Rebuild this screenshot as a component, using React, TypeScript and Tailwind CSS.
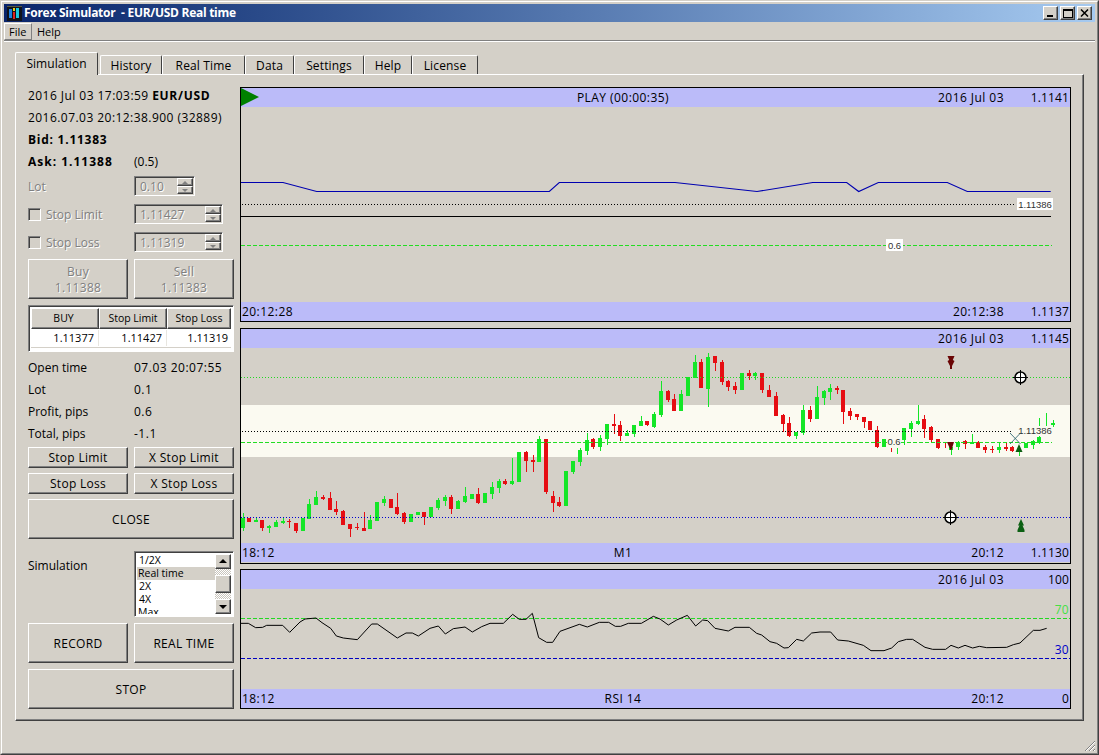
import React from "react";

const raised = "border border-t-white border-l-white border-r-[#404040] border-b-[#404040] shadow-[inset_-1px_-1px_0_#808080]";
const sunken = "border border-t-[#808080] border-l-[#808080] border-r-white border-b-white shadow-[inset_1px_1px_0_#404040]";
const disabledText = "text-[#808080] [text-shadow:1px_1px_0_#fff]";

// candles read off the 3x crops: [x, bodyTop, bodyBottom, wickTop, wickBottom, green?]
type Candle = [number, number, number, number, number, number];

const candlesA: Candle[] = [
  [8, 533, 565, 518, 572, 1], [28, 533, 545, 533, 545, 0], [47, 540, 545, 535, 547, 1], [67, 540, 565, 540, 572, 0],
  [88, 558, 565, 555, 578, 1], [109, 545, 562, 541, 562, 1], [128, 543, 549, 534, 552, 1], [148, 543, 547, 537, 563, 0],
  [169, 549, 573, 549, 578, 0], [190, 534, 573, 534, 573, 1], [208, 492, 536, 477, 538, 1], [229, 470, 495, 453, 495, 1],
  [250, 471, 476, 464, 480, 0], [270, 474, 510, 457, 510, 0], [289, 507, 516, 483, 524, 0], [310, 513, 554, 510, 554, 0],
  [331, 553, 566, 553, 590, 0], [352, 561, 565, 549, 569, 0], [371, 563, 572, 516, 572, 0], [391, 540, 566, 525, 566, 1],
  [412, 487, 542, 487, 542, 1], [433, 476, 490, 468, 497, 1], [454, 477, 505, 477, 505, 0], [472, 501, 522, 459, 525, 0],
  [493, 519, 546, 516, 551, 0], [514, 522, 545, 522, 545, 1], [535, 515, 525, 515, 525, 1], [553, 516, 532, 516, 555, 0],
  [574, 501, 532, 501, 532, 1], [595, 480, 505, 475, 510, 1], [616, 470, 483, 464, 497, 1], [634, 470, 507, 464, 521, 0],
  [655, 483, 506, 480, 507, 1], [676, 468, 487, 441, 488, 1], [697, 461, 477, 461, 477, 1], [715, 462, 490, 444, 492, 0],
  [736, 458, 488, 458, 488, 1], [757, 441, 462, 427, 476, 1], [778, 423, 444, 417, 458, 1], [796, 423, 432, 417, 434, 0],
  [817, 423, 432, 354, 435, 1], [838, 336, 427, 336, 427, 1], [859, 336, 362, 333, 396, 0], [878, 360, 366, 345, 396, 0],
];

const candlesB: Candle[] = [
  [28, 297, 365, 288, 365, 1], [49, 297, 457, 297, 462, 0], [70, 467, 488, 453, 516, 0], [88, 486, 498, 471, 500, 0],
  [109, 393, 497, 393, 497, 1], [130, 363, 397, 363, 402, 1], [151, 330, 366, 324, 378, 1], [172, 300, 333, 279, 345, 1],
  [190, 297, 321, 294, 327, 0], [211, 294, 321, 285, 333, 1], [232, 252, 297, 252, 315, 1], [253, 252, 258, 222, 282, 0],
  [271, 255, 288, 243, 303, 0], [292, 279, 288, 270, 288, 1], [313, 255, 282, 255, 291, 1], [334, 243, 258, 228, 258, 1],
  [352, 243, 255, 243, 258, 0], [373, 222, 261, 216, 264, 1], [394, 153, 225, 123, 231, 1], [415, 153, 180, 150, 186, 0],
  [433, 177, 213, 162, 213, 0], [454, 162, 213, 150, 213, 1], [475, 111, 168, 111, 168, 1], [496, 66, 114, 45, 114, 1],
  [514, 66, 144, 57, 144, 0], [535, 51, 147, 39, 201, 1], [556, 48, 69, 48, 93, 0], [577, 66, 126, 60, 135, 0],
  [595, 123, 141, 120, 153, 0], [616, 138, 150, 126, 162, 0], [637, 99, 150, 99, 150, 1], [658, 99, 108, 90, 120, 0],
  [676, 99, 108, 96, 120, 1], [697, 99, 150, 99, 159, 0], [718, 150, 171, 135, 171, 0], [739, 168, 228, 156, 228, 0],
  [760, 225, 252, 222, 276, 0], [778, 249, 288, 231, 291, 0], [799, 276, 288, 276, 297, 1], [820, 210, 279, 195, 285, 1],
];

const candlesC: Candle[] = [
  [31, 210, 238, 198, 246, 0], [50, 171, 237, 138, 237, 1], [71, 153, 174, 150, 195, 1], [91, 144, 156, 132, 180, 1],
  [112, 144, 150, 138, 162, 0], [130, 150, 216, 150, 252, 0], [151, 213, 228, 204, 240, 0], [172, 222, 231, 222, 240, 0],
  [193, 231, 246, 231, 264, 0], [211, 243, 270, 243, 270, 0], [232, 270, 321, 258, 324, 0], [253, 297, 321, 297, 321, 1],
  [274, 324, 324, 324, 336, 0], [292, 324, 324, 324, 342, 1], [313, 264, 300, 264, 315, 1], [334, 249, 267, 243, 291, 1],
  [355, 243, 252, 195, 255, 1], [373, 237, 267, 225, 294, 0], [394, 261, 300, 258, 306, 0], [415, 297, 324, 297, 327, 0],
  [436, 312, 312, 306, 324, 0], [454, 321, 330, 321, 345, 1], [475, 306, 321, 303, 330, 1], [496, 303, 312, 300, 327, 0],
  [517, 306, 312, 282, 312, 1], [535, 306, 324, 303, 324, 0], [556, 321, 330, 315, 339, 0], [577, 327, 330, 318, 339, 0],
  [598, 321, 330, 306, 339, 1], [619, 321, 327, 309, 333, 0], [637, 321, 333, 318, 336, 0], [658, 330, 336, 318, 348, 1],
  [679, 309, 324, 309, 324, 1], [700, 303, 315, 300, 327, 1], [718, 291, 309, 234, 312, 1], [739, 256, 256, 219, 258, 1],
  [760, 249, 255, 240, 261, 1],
];

const rsiA = [
  [3, 160], [25, 160], [47, 173], [68, 172], [80, 166], [128, 166], [149, 187], [180, 156], [195, 147], [228, 144], [246, 158], [272, 175],
  [289, 198], [310, 204], [352, 209], [395, 162], [412, 162], [472, 204], [498, 189], [517, 189], [535, 198], [570, 175], [595, 168], [616, 192],
  [640, 176], [675, 171], [697, 186], [725, 170], [750, 160], [790, 160], [818, 133], [838, 148], [858, 148], [877, 130], [896, 203], [920, 217],
  [938, 217], [960, 184], [1018, 163], [1042, 171], [1078, 157], [1106, 157], [1126, 169], [1142, 169], [1165, 160], [1204, 160], [1240, 139], [1260, 147],
];

const rsiB = [
  [25, 165], [50, 150], [82, 136], [107, 168], [128, 150], [143, 152], [165, 175], [205, 183], [225, 172], [268, 172], [290, 190], [305, 195],
  [330, 215], [350, 220], [372, 234], [385, 233], [410, 208], [430, 213], [455, 189], [480, 186], [512, 186], [533, 210], [565, 213], [610, 226],
  [633, 242], [672, 242], [695, 234], [715, 215], [740, 208], [758, 208], [795, 232], [818, 238], [857, 238], [873, 226], [895, 234], [915, 226],
  [938, 234], [958, 229], [980, 233], [1040, 232], [1060, 224], [1080, 219], [1120, 181], [1140, 181], [1160, 175],
];

const rsiPoints = [
  ...rsiA.map(([x, y]) => `${240 + x / 3},${570 + y / 3}`),
  ...rsiB.map(([x, y]) => `${660 + x / 3},${570 + y / 3}`),
].join(" ");

const Candles = ({ rows, ox }: { rows: Candle[]; ox: number }) => (
  <g shapeRendering="crispEdges">
    {rows.map(([x, bt, bb, wt, wb, up], i) => {
      const cx = Math.round(ox + x / 3);
      const color = up ? "#14e628" : "#e60d13";
      return (
        <g key={i} fill={color}>
          <rect x={cx} y={340 + wt / 3} width={1} height={(wb - wt) / 3} />
          <rect x={cx - 2} y={340 + bt / 3} width={4} height={(bb - bt) / 3} />
        </g>
      );
    })}
  </g>
);

const Band = ({ left, mid, date, value }: { left?: string; mid?: string; date?: string; value?: string }) => (
  <div className="flex h-[19px] shrink-0 items-center bg-[#bbbbf9] text-black">
    <div className="grid w-[763px] grid-cols-[1fr_auto_1fr] pl-[1px] tracking-[0.45px]">
      <span>{left}</span>
      <span>{mid}</span>
      <span className="text-right">{date}</span>
    </div>
    <span className="flex-1 pr-[1px] text-right tracking-[0.15px]">{value}</span>
  </div>
);

const Crosshair = ({ x, y }: { x: number; y: number }) => (
  <g stroke="#000">
    <circle cx={x} cy={y} r={5.5} fill="#fff" strokeWidth={1.5} />
    <path d={`M${x - 7.5} ${y}H${x + 7.5}M${x} ${y - 7.5}V${y + 7.5}`} strokeWidth={1} />
  </g>
);

const PriceChart = () => (
  <svg viewBox="241 107 829 195" className="block h-[195px] w-[829px]">
    <polyline
      points="241,182.5 283,182.5 316.7,191.5 549.3,191.5 559.3,182.5 675,182.5 757,191.5 812.7,182.5 846.7,182.5 858.7,191.5 878.3,182.5 947.3,182.5 967.3,191.5 1050.7,191.5"
      fill="none"
      stroke="#0000b0"
      strokeWidth={1.1}
    />
    <line x1={242} x2={1015} y1={204.5} y2={204.5} stroke="#000" strokeDasharray="1 2" />
    <line x1={241} x2={1051} y1={216.5} y2={216.5} stroke="#000" />
    <line x1={241} x2={1052} y1={245.5} y2={245.5} stroke="#22dd22" strokeDasharray="4 2" />
    <rect x={1017} y={198} width={36} height={12} fill="#fff" />
    <rect x={886} y={239} width={17} height={12} fill="#fff" />
    <text x={1035} y={207.5} textAnchor="middle" fontSize={9.5} fill="#333" fontFamily="Liberation Sans, sans-serif">1.11386</text>
    <text x={894.5} y={248.5} textAnchor="middle" fontSize={9.5} fill="#333" fontFamily="Liberation Sans, sans-serif">0.6</text>
  </svg>
);

const CandleChart = () => (
  <svg viewBox="241 348 829 195" className="block h-[195px] w-[829px]">
    <rect x={241} y={405} width={829} height={52} fill="#fbfaf1" />
    <Candles rows={candlesA} ox={240} />
    <Candles rows={candlesB} ox={530} />
    <Candles rows={candlesC} ox={800} />
    <line x1={241} x2={1070} y1={377.5} y2={377.5} stroke="#22d822" strokeDasharray="1 2" />
    <line x1={242} x2={1012} y1={431.5} y2={431.5} stroke="#000" strokeDasharray="1 2" />
    <line x1={241} x2={1052} y1={442.5} y2={442.5} stroke="#22dd22" strokeDasharray="4 2" />
    <line x1={241} x2={1070} y1={517.5} y2={517.5} stroke="#0000d0" strokeDasharray="1 2" />
    <rect x={888} y={436} width={12} height={11} fill="#fbfaf1" />
    <rect x={1018} y={426} width={34} height={10} fill="#fbfaf1" />
    <text x={894} y={445} textAnchor="middle" fontSize={9.5} fill="#333" fontFamily="Liberation Sans, sans-serif">0.6</text>
    <text x={1035} y={434} textAnchor="middle" fontSize={9.5} fill="#333" fontFamily="Liberation Sans, sans-serif">1.11386</text>
    <path d="M1010 433L1020.5 444M1020.5 433L1010 444" stroke="#1f5a66" strokeWidth={0.8} fill="none" />
    <polygon points="947.5,356 954.5,356 952.8,360 954.5,361 952,366 952,369 950,369 950,366 947.5,361 949.2,360" fill="#6a0505" />
    <polygon points="947,442 954,442 951.5,450 950.5,450" fill="#6a0505" />
    <polygon points="1021,519 1024,525.5 1022.5,525.5 1024.5,530 1024.5,532 1017.5,532 1017.5,530 1019.5,525.5 1018,525.5" fill="#0b5f12" />
    <polygon points="1019,444 1022.5,452 1015.5,452" fill="#0b5f12" />
    <Crosshair x={1020.5} y={377.5} />
    <Crosshair x={950.5} y={517.5} />
  </svg>
);

const RsiChart = () => (
  <svg viewBox="241 589 829 100" className="block h-[100px] w-[829px]">
    <line x1={241} x2={1070} y1={618.5} y2={618.5} stroke="#22d822" strokeDasharray="4 2" />
    <line x1={241} x2={1070} y1={658.5} y2={658.5} stroke="#0000c0" strokeDasharray="4 2" />
    <polyline points={rsiPoints} fill="none" stroke="#000" strokeWidth={1} />
    <text x={1068.5} y={613.5} textAnchor="end" fontSize={12} fill="#44e044" fontFamily="Open Sans, sans-serif">70</text>
    <text x={1068.5} y={654} textAnchor="end" fontSize={12} fill="#0000c8" fontFamily="Open Sans, sans-serif">30</text>
  </svg>
);

const SpinBox = ({ value, width }: { value: string; width: string }) => (
  <div className={`flex h-[20px] items-center justify-between pl-[5px] pr-[1px] ${sunken} ${width}`}>
    <span className={`pt-[1px] ${disabledText}`}>{value}</span>
    <div className="flex w-[16px] flex-col">
      <div className={`flex h-[8px] items-center justify-center ${raised}`}>
        <div className="h-0 w-0 border-x-[3px] border-b-[3px] border-x-transparent border-b-[#808080]" />
      </div>
      <div className={`flex h-[8px] items-center justify-center ${raised}`}>
        <div className="h-0 w-0 border-x-[3px] border-t-[3px] border-x-transparent border-t-[#808080]" />
      </div>
    </div>
  </div>
);

const Btn = ({ children, className, disabled }: { children: React.ReactNode; className: string; disabled?: boolean }) => (
  <div className={`flex flex-col items-center justify-center pt-[1px] leading-[16px] tracking-[0.3px] ${raised} ${className} ${disabled ? disabledText : ""}`}>
    {children}
  </div>
);

const StopRow = ({ label, value, className }: { label: string; value: string; className: string }) => (
  <div className={`flex items-center ${className}`}>
    <div className={`h-[13px] w-[13px] ${sunken}`} />
    <span className={`ml-[5px] w-[88px] pt-[1px] ${disabledText}`}>{label}</span>
    <SpinBox value={value} width="w-[89px]" />
  </div>
);

const InfoRow = ({ label, value }: { label: string; value: string }) => (
  <div className="flex h-[22px] items-center">
    <span className="w-[106px]">{label}</span>
    <span className="tracking-[0.5px]">{value}</span>
  </div>
);

const tabs = [
  { name: "History", w: "w-[62px]" },
  { name: "Real Time", w: "w-[83px]" },
  { name: "Data", w: "w-[49px]" },
  { name: "Settings", w: "w-[70px]" },
  { name: "Help", w: "w-[48px]" },
  { name: "License", w: "w-[66px]" },
];

const ScrollArrow = ({ up }: { up?: boolean }) => (
  <div className={`flex h-[15px] items-center justify-center bg-[#d4d0c8] ${raised}`}>
    <div className={`h-0 w-0 border-x-[4px] border-x-transparent ${up ? "border-b-[4px] border-b-black" : "border-t-[4px] border-t-black"}`} />
  </div>
);

export default function App() {
  return (
    <div className="relative h-[755px] w-[1099px] overflow-hidden border border-t-[#d4d0c8] border-l-[#d4d0c8] border-r-[#404040] border-b-[#404040] bg-[#d4d0c8] font-['Open_Sans',sans-serif] text-[12px] text-black">
      <div className="h-full border border-t-white border-l-white border-r-[#808080] border-b-[#808080] p-[2px]">
        {/* title bar */}
        <div className="flex h-[18px] items-center bg-gradient-to-r from-[#0a246a] to-[#a6caf0] pl-[3px] pr-[3px]">
          <svg viewBox="0 0 15 15" className="h-[15px] w-[15px]">
            <rect width="15" height="15" fill="#10131c" />
            <rect x="2" y="3" width="3" height="9" fill="#1b7fe0" />
            <rect x="6" y="6" width="2" height="7" fill="#e02020" />
            <rect x="9" y="2" width="3" height="10" fill="#19c8e0" />
            <rect x="6" y="2" width="2" height="3" fill="#e0d020" />
            <rect x="0" y="0" width="15" height="1" fill="#5a5a40" />
          </svg>
          <span className="ml-[2px] whitespace-pre font-bold tracking-[-0.28px] text-white">Forex Simulator  - EUR/USD Real time</span>
          <div className="ml-auto flex gap-[2px]">
            <div className={`relative h-[14px] w-[15px] bg-[#d4d0c8] ${raised}`}>
              <div className="absolute bottom-[2px] left-[3px] h-[2px] w-[6px] bg-black" />
            </div>
            <div className={`h-[14px] w-[15px] bg-[#d4d0c8] p-[2px] ${raised}`}>
              <div className="h-[9px] w-[10px] border border-t-2 border-black" />
            </div>
            <div className={`flex h-[14px] w-[15px] items-center justify-center bg-[#d4d0c8] ${raised}`}>
              <svg viewBox="0 0 9 8" className="h-[8px] w-[9px]">
                <path d="M1 0.5L8 7.5M8 0.5L1 7.5" stroke="#000" strokeWidth={1.5} />
              </svg>
            </div>
          </div>
        </div>

        {/* menu */}
        <div className="mt-[1px] flex h-[17px] items-center text-[11px]">
          <div className="flex h-[17px] w-[28px] items-center border border-t-white border-l-white border-r-[#808080] border-b-[#808080] pl-[4px] pt-[1px]">File</div>
          <span className="ml-[5px] pt-[1px]">Help</span>
        </div>
        <div className="h-[2px] border-t border-b border-t-[#808080] border-b-white" />

        {/* tabs */}
        <div className="relative z-10 ml-[11px] mt-[10px] flex h-[23px] items-end">
          <div className="mr-[2px] flex h-[23px] w-[83px] items-center justify-center rounded-t-[2px] border-t border-l border-r border-t-white border-l-white border-r-[#404040] bg-[#d4d0c8] tracking-[0.05px]">
            Simulation
          </div>
          {tabs.map((t) => (
            <div key={t.name} className={`mb-[1px] flex h-[19px] items-center justify-center rounded-t-[2px] border-t border-l border-r border-t-white border-l-white border-r-[#404040] pt-[2px] tracking-[0.15px] ${t.w}`}>
              {t.name}
            </div>
          ))}
        </div>

        {/* pane */}
        <div className="-mt-[1px] ml-[11px] flex h-[647px] w-[1069px] border border-t-white border-l-white border-r-[#404040] border-b-[#404040] pl-[12px] shadow-[inset_-1px_-1px_0_#808080]">
          {/* controls */}
          <div className="flex w-[206px] flex-col pt-[10px]">
            <div className="flex h-[22px] items-center whitespace-pre tracking-[0.45px]">2016 Jul 03 17:03:59 <b className="tracking-[0.7px]">EUR/USD</b></div>
            <div className="flex h-[22px] items-center tracking-[0.45px]">2016.07.03 20:12:38.900 (32889)</div>
            <div className="flex h-[22px] items-center font-bold tracking-[0.75px]">Bid: 1.11383</div>
            <div className="flex h-[22px] items-center">
              <b className="w-[106px] tracking-[1px]">Ask: 1.11388</b>
              <span>(0.5)</span>
            </div>
            <div className="mt-[3px] flex items-center">
              <span className={`w-[106px] pt-[1px] ${disabledText}`}>Lot</span>
              <SpinBox value="0.10" width="w-[61px]" />
            </div>
            <StopRow label="Stop Limit" value="1.11427" className="mt-[8px]" />
            <StopRow label="Stop Loss" value="1.11319" className="mt-[8px]" />
            <div className="mt-[7px] flex gap-[6px]">
              <Btn className="h-[40px] w-[100px]" disabled>
                <span>Buy</span>
                <span>1.11388</span>
              </Btn>
              <Btn className="h-[40px] w-[100px]" disabled>
                <span>Sell</span>
                <span>1.11383</span>
              </Btn>
            </div>

            <div className={`mt-[6px] h-[47px] bg-white p-[2px] text-[11px] ${sunken}`}>
              <div className="flex h-[21px] bg-[#d4d0c8] text-[10.5px]">
                <div className={`flex w-[68px] items-center justify-center pr-[3px] ${raised}`}>BUY</div>
                <div className={`flex w-[68px] items-center justify-center ${raised}`}>Stop Limit</div>
                <div className={`flex flex-1 items-center justify-center ${raised}`}>Stop Loss</div>
              </div>
              <div className="flex h-[19px] items-center border-b border-b-[#d4d0c8]">
                <div className="w-[68px] border-r border-r-[#e8e6e0] pr-[4px] text-right">1.11377</div>
                <div className="w-[68px] border-r border-r-[#e8e6e0] pr-[4px] text-right">1.11427</div>
                <div className="flex-1 pr-[3px] text-right">1.11319</div>
              </div>
            </div>

            <div className="mt-[5px]">
              <InfoRow label="Open time" value="07.03 20:07:55" />
              <InfoRow label="Lot" value="0.1" />
              <InfoRow label="Profit, pips" value="0.6" />
              <InfoRow label="Total, pips" value="-1.1" />
            </div>

            <div className="mt-[2px] flex gap-[6px]">
              <Btn className="h-[21px] w-[100px]">Stop Limit</Btn>
              <Btn className="h-[21px] w-[100px]">X Stop Limit</Btn>
            </div>
            <div className="mt-[5px] flex gap-[6px]">
              <Btn className="h-[21px] w-[100px]">Stop Loss</Btn>
              <Btn className="h-[21px] w-[100px]">X Stop Loss</Btn>
            </div>
            <Btn className="mt-[5px] h-[40px] w-[206px]">CLOSE</Btn>

            <div className="mt-[12px] flex">
              <span className="w-[106px] pt-[6px]">Simulation</span>
              <div className={`flex h-[66px] w-[100px] overflow-hidden bg-white p-[2px] ${sunken}`}>
                <div className="flex-1 overflow-hidden text-[10.5px] leading-[13px]">
                  <div className="pl-[2px]">1/2X</div>
                  <div className="bg-[#d4d0c8] pl-[1px]">Real time</div>
                  <div className="pl-[2px]">2X</div>
                  <div className="pl-[2px]">4X</div>
                  <div className="pl-[1px]">Max</div>
                </div>
                <div className="flex w-[16px] flex-col bg-[repeating-conic-gradient(#fff_0_25%,#c8c4bc_0_50%)] bg-[length:2px_2px]">
                  <ScrollArrow up />
                  <div className={`mt-[6px] h-[19px] bg-[#d4d0c8] ${raised}`} />
                  <div className="mt-[6px]">
                    <ScrollArrow />
                  </div>
                </div>
              </div>
            </div>

            <div className="mt-[6px] flex gap-[6px]">
              <Btn className="h-[40px] w-[100px]">RECORD</Btn>
              <Btn className="h-[40px] w-[100px]">REAL TIME</Btn>
            </div>
            <Btn className="mt-[6px] h-[40px] w-[206px]">STOP</Btn>
          </div>

          {/* charts */}
          <div className="ml-[6px] flex w-[831px] flex-col pt-[12px]">
            <div className="relative h-[235px] border border-black">
              <Band mid="PLAY (00:00:35)" date="2016 Jul 03" value="1.1141" />
              <svg viewBox="0 0 18 19" className="absolute left-0 top-0 h-[19px] w-[18px]">
                <polygon points="0,0 18,9 0,18" fill="#008000" />
              </svg>
              <PriceChart />
              <Band left="20:12:28" date="20:12:38" value="1.1137" />
            </div>
            <div className="mt-[6px] h-[236px] border border-black">
              <Band date="2016 Jul 03" value="1.1145" />
              <CandleChart />
              <Band left="18:12" mid="M1" date="20:12" value="1.1130" />
            </div>
            <div className="mt-[5px] h-[140px] border border-black">
              <Band date="2016 Jul 03" value="100" />
              <RsiChart />
              <Band left="18:12" mid="RSI 14" date="20:12" value="0" />
            </div>
          </div>
        </div>
      </div>

      {/* size grip */}
      <svg viewBox="0 0 12 12" className="absolute bottom-[2px] right-[2px] h-[12px] w-[12px]">
        <path d="M11 1L1 11M11 5L5 11M11 9L9 11" stroke="#808080" strokeWidth={1} fill="none" />
        <path d="M11 2L2 11M11 6L6 11M11 10L10 11" stroke="#fff" strokeWidth={1} fill="none" />
      </svg>
    </div>
  );
}
